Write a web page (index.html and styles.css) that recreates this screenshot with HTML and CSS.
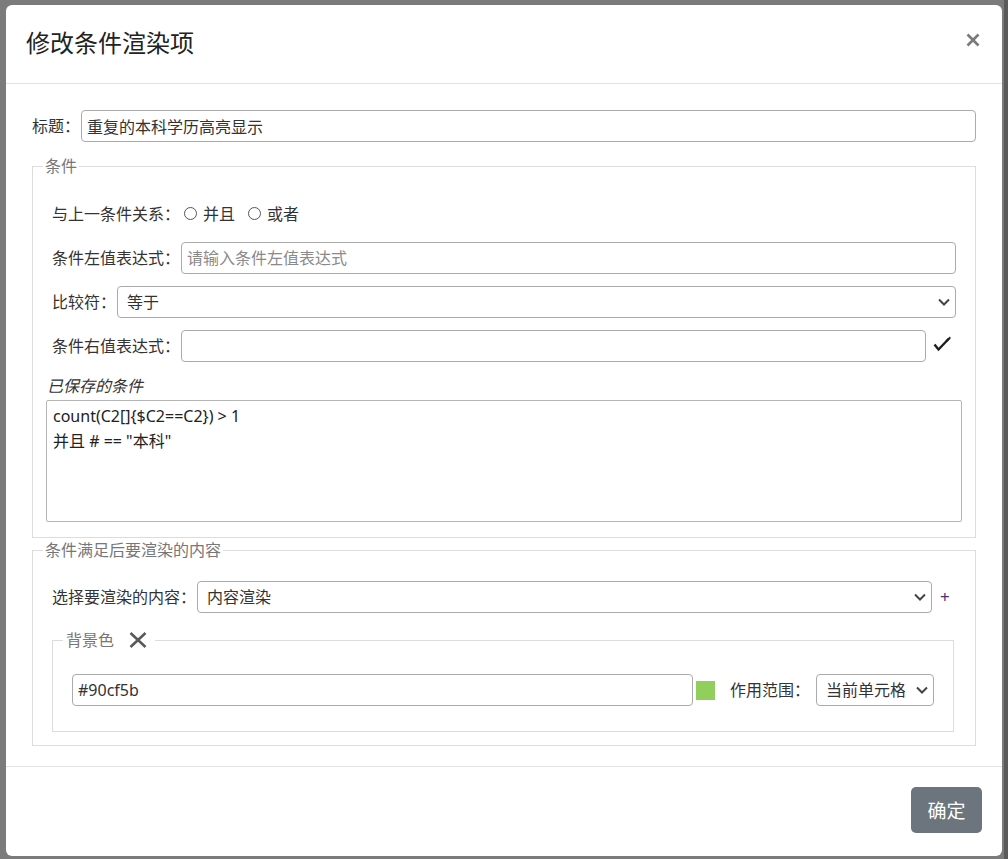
FILE: index.html
```html
<!DOCTYPE html>
<html lang="zh-CN">
<head>
<meta charset="utf-8">
<title>修改条件渲染项</title>
<link rel="stylesheet" href="styles.css">
</head>
<body>
<div class="modal">
  <div class="modal-header">
    <h5 class="modal-title">修改条件渲染项</h5>
    <button class="close" type="button" aria-label="关闭">
      <svg width="14" height="14" viewBox="0 0 14 14"><path d="M1.5 1.5 L12.5 12.5 M12.5 1.5 L1.5 12.5" stroke="#7a7a7a" stroke-width="2.6" fill="none"/></svg>
    </button>
  </div>
  <div class="modal-body">
    <div class="row">
      <label class="lbl">标题：</label>
      <input class="ctl" type="text" value="重复的本科学历高亮显示">
    </div>

    <fieldset class="group cond">
      <legend>条件</legend>
      <div class="row">
        <span class="lbl">与上一条件关系：</span>
        <input class="radio" type="radio" name="rel" id="r1"><label for="r1">并且</label>
        <input class="radio radio2" type="radio" name="rel" id="r2"><label for="r2">或者</label>
      </div>
      <div class="row gap">
        <label class="lbl">条件左值表达式：</label>
        <input class="ctl" type="text" placeholder="请输入条件左值表达式">
      </div>
      <div class="row gap">
        <label class="lbl">比较符：</label>
        <div class="select-wrap">
          <select class="sel"><option>等于</option></select>
          <svg class="chev" width="12" height="8" viewBox="0 0 12 8"><path d="M1 1.5 L6 6.5 L11 1.5" stroke="#444" stroke-width="2" fill="none"/></svg>
        </div>
      </div>
      <div class="row gap">
        <label class="lbl">条件右值表达式：</label>
        <input class="ctl" type="text">
        <span class="check">
          <svg width="18" height="16" viewBox="0 0 18 16"><path d="M1.5 8.5 L5.5 13.5 L16 2.5" stroke="#1e1e1e" stroke-width="2.4" fill="none"/><path d="M12.5 4.5 L17 0.5 L17.8 2.2 L14 6 Z" fill="#1e1e1e"/></svg>
        </span>
      </div>
      <div class="saved-label">已保存的条件</div>
      <textarea class="saved">count(C2[]{$C2==C2}) &gt; 1
并且 # == "本科"</textarea>
    </fieldset>

    <fieldset class="group render">
      <legend>条件满足后要渲染的内容</legend>
      <div class="row">
        <label class="lbl">选择要渲染的内容：</label>
        <div class="select-wrap">
          <select class="sel"><option>内容渲染</option></select>
          <svg class="chev" width="12" height="8" viewBox="0 0 12 8"><path d="M1 1.5 L6 6.5 L11 1.5" stroke="#444" stroke-width="2" fill="none"/></svg>
        </div>
        <span class="plus">+</span>
      </div>
      <fieldset class="inner">
        <legend><span>背景色</span>
          <svg class="del" width="18" height="16" viewBox="0 0 18 16"><path d="M1.5 1 L16.5 15 M16.5 1 L1.5 15" stroke="#5a5a5a" stroke-width="2.6" fill="none"/></svg>
        </legend>
        <div class="row">
          <input class="ctl" type="text" value="#90cf5b">
          <span class="swatch"></span>
          <label class="lbl scope">作用范围：</label>
          <div class="select-wrap small">
            <select class="sel"><option>当前单元格</option></select>
            <svg class="chev" width="12" height="8" viewBox="0 0 12 8"><path d="M1 1.5 L6 6.5 L11 1.5" stroke="#444" stroke-width="2" fill="none"/></svg>
          </div>
        </div>
      </fieldset>
    </fieldset>
  </div>
  <div class="modal-footer">
    <button class="btn" type="button">确定</button>
  </div>
</div>
</body>
</html>
```
FILE: styles.css
```css
* { box-sizing: border-box; }
html, body { margin: 0; height: 100%; }
body {
  background: linear-gradient(to right, #7b7b7b 1004px, #5a5a5a 1004px);
  font-family: "Noto Sans", "Noto Sans CJK SC", sans-serif;
  font-size: 16px;
  line-height: 24px;
  color: #333;
  overflow: hidden;
}
.modal {
  margin: 5px 0 0 6px;
  width: 996px;
  background: #fff;
  border-radius: 6px;
}
.modal-header {
  display: flex;
  align-items: center;
  justify-content: space-between;
  padding: 20px 22px 22px 20px;
  border-bottom: 1px solid #e2e2e2;
}
.modal-title {
  margin: 0;
  font-size: 24px;
  line-height: 36px;
  font-weight: 400;
  color: #222;
}
.close {
  border: 0;
  background: none;
  padding: 0;
  width: 14px;
  height: 14px;
  display: flex;
  margin-top: -6px;
  cursor: pointer;
}
.modal-body { padding: 26px 26px 20px; }
.row {
  display: flex;
  align-items: center;
  height: 32px;
}
.lbl { white-space: nowrap; margin-right: 1px; color: #333; }
.ctl {
  flex: 1;
  min-width: 0;
  height: 32px;
  border: 1px solid #ababab;
  border-radius: 4px;
  padding: 0 5px;
  font: inherit;
  color: #333;
  background: #fff;
}
.ctl::placeholder { color: #8a8a8a; }

.group {
  border: 1px solid #dcdcdc;
  margin: 12px 0 0;
  padding: 20px 13px 15px;
  min-width: 0;
}
.group > legend {
  padding: 0 2px;
  margin-left: -3px;
  color: #777;
  font-size: 16px;
  line-height: 24px;
}
.cond > .row { margin: 0 6px; }
.row.gap { margin-top: 12px; }
.radio {
  appearance: none;
  -webkit-appearance: none;
  margin: -2px 6px 0 3px;
  width: 13px;
  height: 13px;
  border: 1px solid #555;
  border-radius: 50%;
  background: #fff;
  flex: none;
}
.radio2 { margin-left: 13px; }
.check { width: 30px; padding-left: 7px; display: flex; align-items: center; margin-top: -4px; }

.select-wrap { position: relative; flex: 1; display: flex; min-width: 0; }
.sel {
  appearance: none;
  -webkit-appearance: none;
  flex: 1;
  min-width: 0;
  height: 32px;
  border: 1px solid #ababab;
  border-radius: 4px;
  padding: 0 28px 0 9px;
  font: inherit;
  color: #333;
  background: #fff;
}
.chev { position: absolute; right: 6px; top: 12px; pointer-events: none; }

.saved-label { margin: 12px 0 0 1px; font-style: italic; color: #333; }
.saved {
  display: block;
  width: 100%;
  height: 122px;
  margin-top: 2px;
  border: 1px solid #b5b5b5;
  border-radius: 2px;
  padding: 3px 6px;
  font: inherit;
  line-height: 25px;
  color: #222;
  resize: none;
}

.render { margin-top: 0; padding: 19px 13px 13px; }
.render > .row { margin: 0 6px; }
.plus { width: 24px; padding-left: 8px; color: #4b2f7a; font-size: 17px; }

.inner {
  border: 1px solid #dcdcdc;
  margin: 15px 8px 0 6px;
  padding: 22px 19px 25px;
  min-width: 0;
}
.inner > legend {
  display: flex;
  align-items: center;
  padding: 0 8px 0 3px;
  margin-left: -9px;
  color: #777;
  line-height: 24px;
}
.del { margin-left: 15px; }
.swatch { width: 19px; height: 19px; margin-left: 3px; background: #90cf5b; flex: none; }
.scope { margin-left: 15px; margin-right: 6px; }
.select-wrap.small { flex: none; width: 118px; }

.modal-footer {
  display: flex;
  justify-content: flex-end;
  padding: 20px 20px 23px;
  border-top: 1px solid #e2e2e2;
}
.btn {
  width: 71px;
  height: 46px;
  border: 0;
  border-radius: 5px;
  background: #6c757d;
  color: #fff;
  font-family: inherit;
  font-size: 19px;
  padding: 0;
}
```
